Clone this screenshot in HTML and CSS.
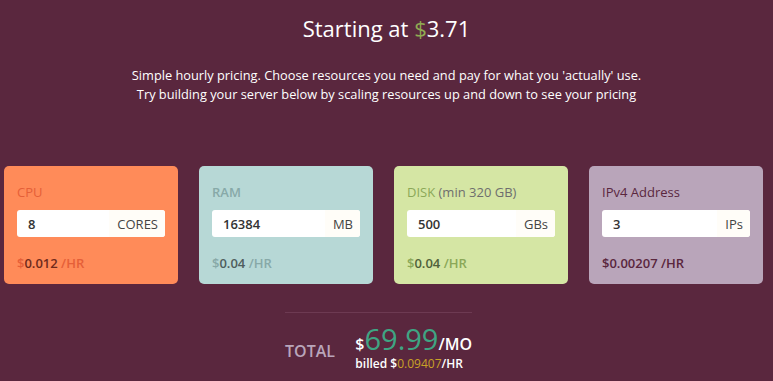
FILE: index.html
```html
<!DOCTYPE html>
<html lang="en">
<head>
    <meta charset="UTF-8">
    <meta name="viewport" content="width=device-width, initial-scale=1.0">
    <title>Pricing</title>
    <link rel="stylesheet" href="styles.css">
</head>
<body>
    <section class="hero">
        <h1>Starting at <span class="dollar">$</span>3.71</h1>
        <p>Simple hourly pricing. Choose resources you need and pay for what you 'actually' use.<br>
        Try building your server below by scaling resources up and down to see your pricing</p>
    </section>

    <div class="cards">
        <div class="card cpu">
            <div class="card-label">CPU</div>
            <div class="field">
                <input type="text" value="8">
                <span class="unit">CORES</span>
            </div>
            <div class="price"><span class="cur">$</span>0.012 <span class="per">/HR</span></div>
        </div>
        <div class="card ram">
            <div class="card-label">RAM</div>
            <div class="field">
                <input type="text" value="16384">
                <span class="unit">MB</span>
            </div>
            <div class="price"><span class="cur">$</span>0.04 <span class="per">/HR</span></div>
        </div>
        <div class="card disk">
            <div class="card-label">DISK <span class="note">(min 320 GB)</span></div>
            <div class="field">
                <input type="text" value="500">
                <span class="unit">GBs</span>
            </div>
            <div class="price"><span class="cur">$</span>0.04 <span class="per">/HR</span></div>
        </div>
        <div class="card ip">
            <div class="card-label">IPv4 Address</div>
            <div class="field">
                <input type="text" value="3">
                <span class="unit">IPs</span>
            </div>
            <div class="price"><span class="cur">$</span>0.00207 <span class="per">/HR</span></div>
        </div>
    </div>

    <div class="total">
        <div class="total-label">TOTAL</div>
        <div class="total-amount">
            <div class="monthly"><span class="cur">$</span><span class="big">69.99</span>/MO</div>
            <div class="hourly">billed $<span class="rate">0.09407</span>/HR</div>
        </div>
    </div>
</body>
</html>
```

FILE: styles.css
```css
/* page */
body {
    margin: 0;
    background-color: #5a273e;
    font-family: 'Open Sans', 'DejaVu Sans', sans-serif;
    color: #fff;
}

.hero {
    text-align: center;
    padding-top: 14px;
}

.hero h1 {
    font-size: 22px;
    font-weight: 400;
    line-height: 28px;
    margin: 0 0 24px;
}

.hero .dollar {
    color: #8fab52;
}

.hero p {
    font-size: 12.8px;
    line-height: 19px;
    margin: 0;
}

/* resource cards */
.cards {
    display: grid;
    grid-template-columns: repeat(4, minmax(0, 1fr));
    gap: 21px;
    padding: 0 10px 0 4px;
    margin-top: 62px;
}

.card {
    min-width: 0;
    border-radius: 5px;
    padding: 18px 13px 12px;
    height: 88px;
}

.card-label {
    font-size: 13px;
    line-height: 16px;
    margin-bottom: 10px;
}

.card-label .note {
    font-weight: 400;
}

.field {
    display: flex;
    height: 27px;
    background-color: #fff;
    border-radius: 3px;
    overflow: hidden;
}

.field input {
    flex: 1;
    width: 0;
    min-width: 0;
    border: none;
    outline: none;
    padding: 0 0 0 11px;
    font-family: inherit;
    font-size: 13px;
    font-weight: 600;
    color: #333;
    background: transparent;
}

.field .unit {
    display: flex;
    align-items: center;
    padding: 0 7px 0 8px;
    font-size: 13px;
    color: #444;
    background-color: #fffdf8;
}

.price {
    margin-top: 18px;
    font-size: 13px;
    font-weight: 600;
    line-height: 16px;
}

.cpu { background-color: #ff8b59; }
.cpu .card-label, .cpu .cur, .cpu .per { color: #e55f38; }
.cpu .price { color: #6e2a1b; }

.ram { background-color: #b7d8d6; }
.ram .card-label, .ram .cur, .ram .per { color: #87a9a8; }
.ram .card-label { font-weight: 600; }
.ram .price { color: #4f5d5d; }

.disk { background-color: #d5e6a4; }
.disk .card-label { color: #8ba858; }
.disk .card-label .note { color: #6e6e6e; }
.disk .cur, .disk .per { color: #8ba858; }
.disk .price { color: #50613a; }

.ip { background-color: #b9a5ba; }
.ip .card-label, .ip .price { color: #5a273e; }

/* total */
.total {
    width: 187px;
    margin: 28px 0 0 285px;
    border-top: 1px solid #6d3a52;
    display: flex;
    align-items: center;
    padding-top: 16px;
}

.total-label {
    font-size: 16px;
    font-weight: 600;
    color: #b9a5ba;
    width: 73px;
    margin-top: 2px;
}

.total-amount {
    font-weight: 600;
}

.monthly {
    font-size: 16px;
    line-height: 25px;
}

.monthly .big {
    font-size: 29px;
    font-weight: 400;
    line-height: 20px;
    color: #3fa583;
}

.hourly {
    font-size: 12px;
    line-height: 14px;
}

.hourly .rate {
    color: #c9a227;
    font-weight: 400;
}
```
